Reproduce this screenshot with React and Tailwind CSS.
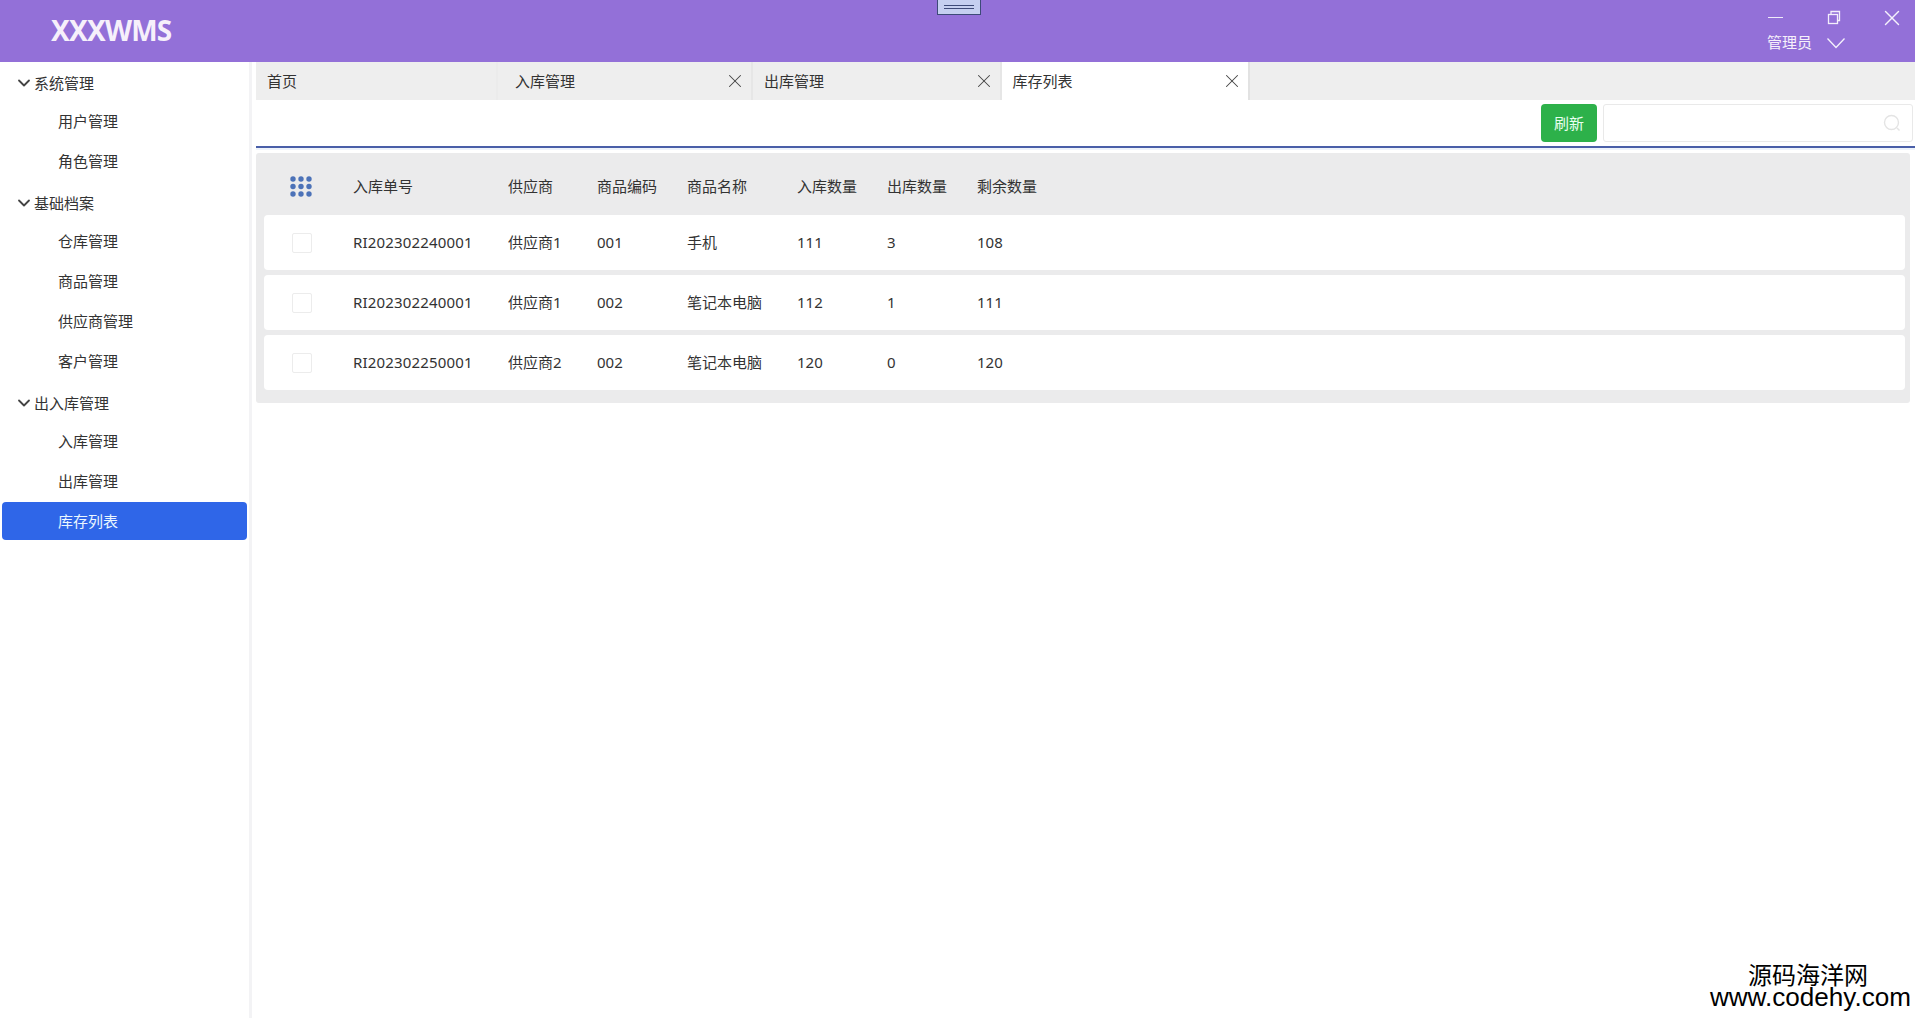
import React from "react";
import { ChevronDown, X } from "lucide-react";

const nav = [
  { title: "系统管理", items: ["用户管理", "角色管理"] },
  { title: "基础档案", items: ["仓库管理", "商品管理", "供应商管理", "客户管理"] },
  { title: "出入库管理", items: ["入库管理", "出库管理", "库存列表"] },
];

const tabs = [
  { label: "首页", cls: "w-[242px] pl-[11px] border-[#ebebeb]" },
  { label: "入库管理", close: true, cls: "w-[255px] pl-[17px] border-[#e6e6e6]" },
  { label: "出库管理", close: true, cls: "w-[248.5px] pl-[11px] border-[#e6e6e6]" },
  { label: "库存列表", close: true, active: true, cls: "w-[248.5px] pl-[11px] border-[#e2e2e2] bg-white" },
];

const columns = ["入库单号", "供应商", "商品编码", "商品名称", "入库数量", "出库数量", "剩余数量"];

const rows = [
  ["RI202302240001", "供应商1", "001", "手机", "111", "3", "108"],
  ["RI202302240001", "供应商1", "002", "笔记本电脑", "112", "1", "111"],
  ["RI202302250001", "供应商2", "002", "笔记本电脑", "120", "0", "120"],
];

const gridCols = "grid grid-cols-[89px_155px_89px_90px_110px_90px_90px_1fr] items-center";

function Header() {
  return (
    <header className="relative flex h-[62px] shrink-0 items-center justify-between bg-[#9370d8] text-white">
      <h1 className="mb-[2px] ml-[51px] text-[28px] font-bold leading-none tracking-[-0.8px] text-[#f6f0fb]">XXXWMS</h1>
      <div className="absolute left-[937px] top-0 flex h-[15px] w-[44px] flex-col items-center justify-center gap-[2px] border border-t-0 border-[#3d4a78] bg-[#c5cff0]">
        <span className="block h-px w-[30px] bg-[#3d4a78]" />
        <span className="block h-px w-[30px] bg-[#3d4a78]" />
      </div>
      <div className="mr-[10px] flex w-[141px] flex-col">
        <div className="flex h-[20px] items-center justify-between">
          <span className="ml-[4px] block h-px w-[15px] bg-[#f0ebfa]" />
          <svg className="ml-[6px]" width="14" height="15" viewBox="0 0 14 15" fill="none" stroke="#f3effb" strokeWidth="1.3">
            <rect x="1.5" y="4.5" width="9" height="9" />
            <path d="M4 4.5V1.5h8.5v9h-2" />
          </svg>
          <X className="h-[26px] w-[26px]" strokeWidth={1.3} color="#f5f2fc" />
        </div>
        <div className="mt-[3px] flex h-[24px] items-center">
          <span className="ml-[3px] text-[15px] text-[#f6f1fb]">管理员</span>
          <svg className="ml-[14px]" width="20" height="12" viewBox="0 0 20 12" fill="none" stroke="#f5f2fc" strokeWidth="1.3">
            <path d="M1.5 1.5L10 10.5L18.5 1.5" />
          </svg>
        </div>
      </div>
    </header>
  );
}

function Sidebar() {
  return (
    <aside className="flex w-[252px] shrink-0 flex-col border-r-[3px] border-[#f3f3f5] bg-white pt-[3px] pr-[1px]">
      {nav.map((group, i) => (
        <div key={group.title} className={i > 0 ? "mt-[4px]" : ""}>
          <div className="flex h-[36px] items-center pl-[14px] text-[15px] text-[#333]">
            <ChevronDown className="h-[20px] w-[20px]" strokeWidth={2.2} color="#444" />
            <span>{group.title}</span>
          </div>
          {group.items.map((item) => {
            const active = item === "库存列表";
            return (
              <div key={item} className="flex h-[40px] items-center">
                <div
                  className={
                    active
                      ? "ml-[2px] flex h-[38px] w-[245px] items-center rounded-[4px] bg-[#2f66e8] pl-[56px] text-[15px] text-[#eaf6ff]"
                      : "flex h-[38px] w-full items-center pl-[58px] text-[15px] text-[#333]"
                  }
                >
                  {item}
                </div>
              </div>
            );
          })}
        </div>
      ))}
    </aside>
  );
}

function Tabs() {
  return (
    <div className="flex h-[38px] shrink-0 items-stretch bg-[#eeeeee]">
      {tabs.map((tab) => (
        <div
          key={tab.label}
          className={"flex items-center justify-between border-r-2 pr-[5px] text-[15px] text-[#333] " + tab.cls}
        >
          <span>{tab.label}</span>
          {tab.close && <X className="h-[22px] w-[22px]" strokeWidth={1.1} color="#444" />}
        </div>
      ))}
    </div>
  );
}

function Toolbar() {
  return (
    <div className="flex h-[48px] shrink-0 items-start justify-end border-b-2 border-[#4a5fa8] bg-white pt-[4px]">
      <button className="flex h-[38px] w-[56px] items-center justify-center rounded-[4px] bg-[#2db14a] text-[15px] text-[#e8fff0]">
        刷新
      </button>
      <div className="ml-[6px] mr-[2px] flex h-[38px] w-[310px] items-center justify-end rounded-[3px] border border-[#e9e9e9] pr-[11px]">
        <input className="h-full min-w-0 flex-1 bg-transparent outline-none" />
        <svg width="18" height="18" viewBox="0 0 18 18" fill="none" stroke="#e4e4e4" strokeWidth="1.4">
          <circle cx="8.5" cy="8.5" r="7" />
          <path d="M14 14l2.5 2.5" />
        </svg>
      </div>
    </div>
  );
}

function GridIcon() {
  return (
    <svg width="22" height="21" viewBox="0 0 22 21" fill="#4c72b8">
      {[3, 10.5, 18].map((cy) =>
        [3, 11, 19].map((cx) => <circle key={cx + "-" + cy} cx={cx} cy={cy} r="2.7" />)
      )}
    </svg>
  );
}

function StockTable() {
  return (
    <section className="mr-[5px] mt-[3px] rounded-[3px] bg-[#ebebec] pb-[13px] pl-[8px] pr-[5px]">
      <div className={gridCols + " h-[62px] pt-[5px] text-[15px] text-[#333]"}>
        <div className="flex pl-[26px]">
          <GridIcon />
        </div>
        {columns.map((c) => (
          <div key={c}>{c}</div>
        ))}
      </div>
      <div className="flex flex-col gap-[5px]">
        {rows.map((row, i) => (
          <div key={i} className={gridCols + " h-[55px] rounded-[4px] bg-white text-[15px] text-[#333]"}>
            <div className="flex pl-[28px]">
              <input type="checkbox" className="h-[20px] w-[20px] appearance-none rounded-[2px] border border-[#ececec] bg-white" />
            </div>
            {row.map((v, j) => (
              <div key={j} className={j === 0 ? "tracking-[0.17px]" : ""}>{v}</div>
            ))}
          </div>
        ))}
      </div>
    </section>
  );
}

export default function App() {
  return (
    <div className="relative flex h-screen w-full flex-col overflow-hidden bg-white font-['Noto_Sans','Noto_Sans_CJK_SC',sans-serif]">
      <Header />
      <div className="flex min-h-0 flex-1">
        <Sidebar />
        <main className="flex min-w-0 flex-1 flex-col pl-[4px]">
          <Tabs />
          <Toolbar />
          <div className="h-[2px] shrink-0 bg-[#eef3fb]" />
          <StockTable />
        </main>
      </div>
      <div className="absolute bottom-[9px] right-[4px] flex flex-col items-center text-black font-['Liberation_Sans','Noto_Sans_CJK_SC',sans-serif]">
        <span className="mr-[5px] text-[24px] leading-[22px] font-['Noto_Sans_CJK_SC',sans-serif]">源码海洋网</span>
        <span className="text-[26.1px] leading-[24px]">www.codehy.com</span>
      </div>
    </div>
  );
}
